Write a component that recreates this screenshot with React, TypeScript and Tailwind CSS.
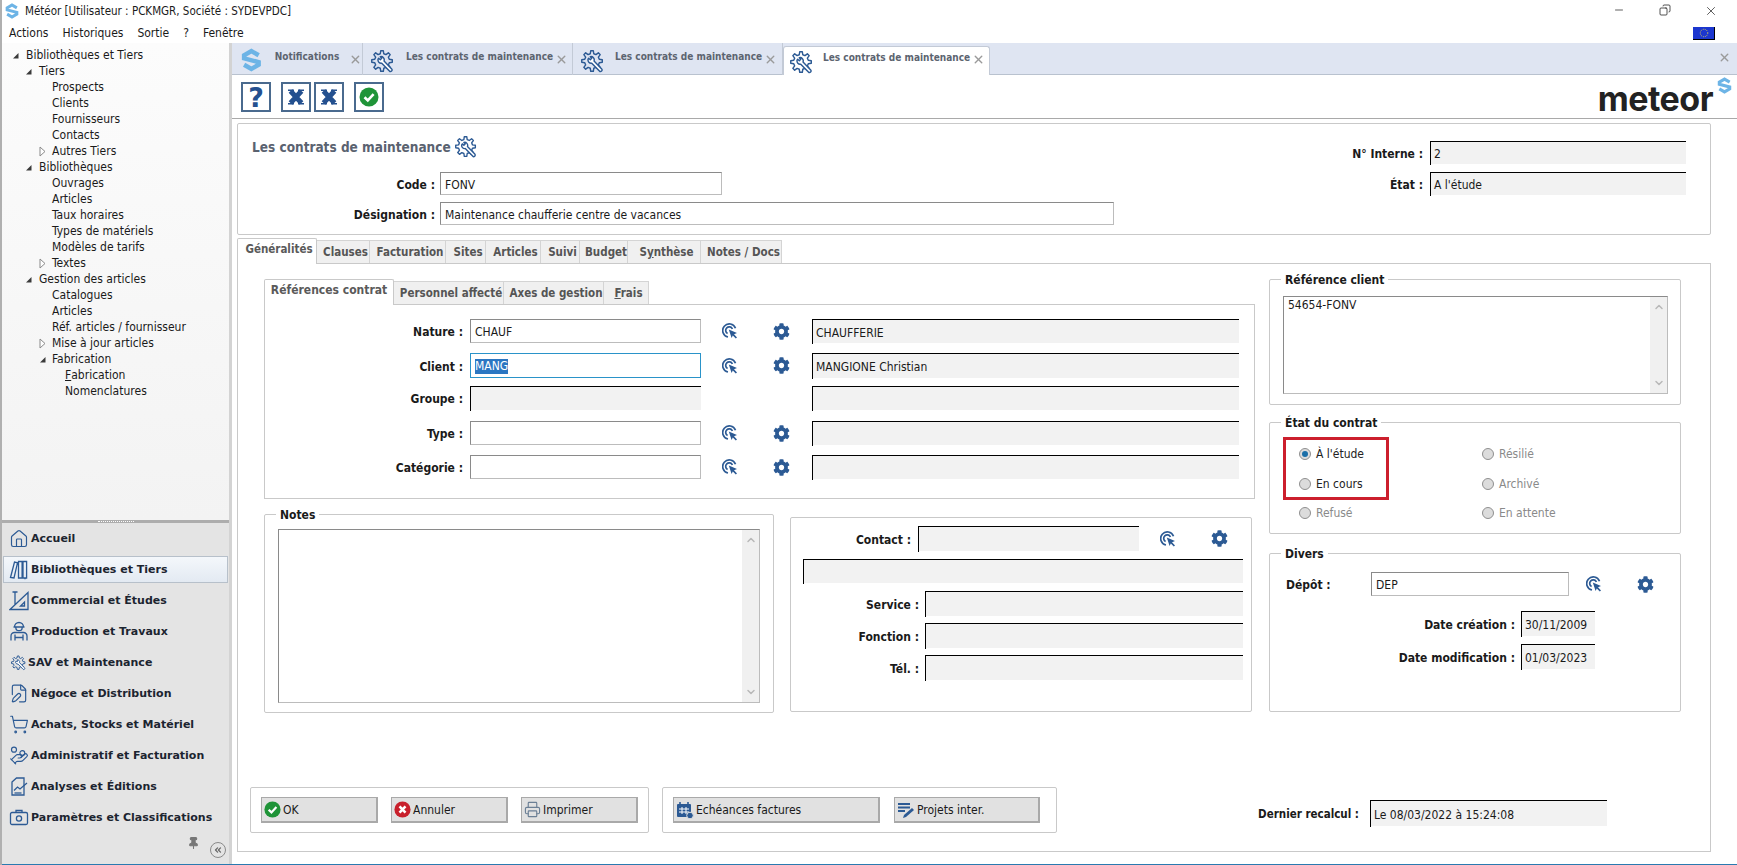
import React from "react";
import {
  ChevronDown,
  ChevronUp,
  ChevronsLeft,
  Copy,
  FilePen,
  HandCoins,
  House,
  Minus,
  Pin,
  Printer,
  ShoppingCart,
  X,
} from "lucide-react";
import { FaCog } from "react-icons/fa";

const BLUE = "#2c5a94";

const TREE: { label: React.ReactNode; level: number; state?: "open" | "closed" }[] = [
  { label: "Bibliothèques et Tiers", level: 0, state: "open" },
  { label: "Tiers", level: 1, state: "open" },
  { label: "Prospects", level: 2 },
  { label: "Clients", level: 2 },
  { label: "Fournisseurs", level: 2 },
  { label: "Contacts", level: 2 },
  { label: "Autres Tiers", level: 2, state: "closed" },
  { label: "Bibliothèques", level: 1, state: "open" },
  { label: "Ouvrages", level: 2 },
  { label: "Articles", level: 2 },
  { label: "Taux horaires", level: 2 },
  { label: "Types de matériels", level: 2 },
  { label: "Modèles de tarifs", level: 2 },
  { label: "Textes", level: 2, state: "closed" },
  { label: "Gestion des articles", level: 1, state: "open" },
  { label: "Catalogues", level: 2 },
  { label: "Articles", level: 2 },
  { label: "Réf. articles / fournisseur", level: 2 },
  { label: "Mise à jour articles", level: 2, state: "closed" },
  { label: "Fabrication", level: 2, state: "open" },
  { label: <><u>F</u>abrication</>, level: 3 },
  { label: "Nomenclatures", level: 3 },
];

// outline of an 8 tooth gear, centred at 11.5,11.5
const GEAR_PATH = (() => {
  const pts: string[] = [];
  const teeth = 8;
  for (let i = 0; i < teeth; i++) {
    const a = (i / teeth) * Math.PI * 2;
    const step = (Math.PI * 2) / teeth;
    const at = (r: number, t: number) =>
      `${(11.5 + r * Math.cos(a + t)).toFixed(2)} ${(11.5 + r * Math.sin(a + t)).toFixed(2)}`;
    pts.push(at(7.8, -step * 0.3), at(10.8, -step * 0.16), at(10.8, step * 0.16), at(7.8, step * 0.3));
  }
  return `M${pts.join("L")}Z`;
})();

function LogoS({ className }: { className?: string }) {
  return (
    <svg viewBox="0 0 24 28" className={className}>
      <path d="M20.5 8.5 12 3.5 3.5 8.5v3.5L20.5 16.5v3L12 24.5 3.5 19.5" fill="none" stroke="#6db4e6" strokeWidth="5.2" />
    </svg>
  );
}

function GearWrench({ className }: { className?: string }) {
  return (
    <svg viewBox="0 0 24 24" fill="none" stroke={BLUE} strokeWidth="1.5" strokeLinejoin="round" className={className}>
      <path d={GEAR_PATH} />
      <path d="M8 8.6l1.7 1.5 1.5-1.5L9.7 7a3.3 3.3 0 0 1 3.9 4.4l8 8.3a1.6 1.6 0 0 1-2.4 2.2l-8-8.2a3.3 3.3 0 0 1-3.8-4.1z" fill="#ffffff" />
    </svg>
  );
}

function TargetCursor({ className }: { className?: string }) {
  return (
    <svg viewBox="0 0 16 16" fill="none" stroke={BLUE} strokeWidth="1.7" className={className}>
      <path d="M13.5 5.2A6.6 6.6 0 1 0 6 14" />
      <path d="M10.4 6A3.5 3.5 0 1 0 5.6 10.5" />
      <path d="M6.8 6.6 15 10l-3 1.2 3 3.2-1.2 1.1-3-3.1L9.6 15z" fill={BLUE} stroke="none" />
    </svg>
  );
}

function CheckBadge({ className }: { className?: string }) {
  return (
    <svg viewBox="0 0 20 20" className={className}>
      <circle cx="10" cy="10" r="9.5" fill="#1f9438" />
      <path d="M5.5 10.2 8.8 13.4 14.6 7.2" fill="none" stroke="#ffffff" strokeWidth="2.6" />
    </svg>
  );
}

function CrossBadge({ className }: { className?: string }) {
  return (
    <svg viewBox="0 0 20 20" className={className}>
      <circle cx="10" cy="10" r="9.5" fill="#c8202c" />
      <path d="M6.5 6.2 13.5 13.8M13.5 6.2 6.5 13.8" fill="none" stroke="#ffffff" strokeWidth="3" />
    </svg>
  );
}

function SlabX() {
  return (
    <svg viewBox="0 0 20 20" className="w-[20px] h-[20px]">
      <path d="M4.5 4 15.5 16M15.5 4 4.5 16" stroke="#24508f" strokeWidth="5" fill="none" />
      <path d="M2 3.2h6M12 3.2h6M2 16.8h6M12 16.8h6" stroke="#24508f" strokeWidth="1.6" fill="none" />
    </svg>
  );
}

function Triangle({ state }: { state: "open" | "closed" }) {
  if (state === "open") {
    return (
      <svg viewBox="0 0 7 7" className="w-[7px] h-[7px]">
        <path d="M6.5 1v5.5H1z" fill="#3a3a3a" />
      </svg>
    );
  }
  return (
    <svg viewBox="0 0 7 11" className="w-[7px] h-[11px]">
      <path d="M1 1l5 4.5L1 10z" fill="#ffffff" stroke="#8a8a8a" />
    </svg>
  );
}

function Input({ value, className = "", focus = false }: { value?: string; className?: string; focus?: boolean }) {
  return (
    <div
      className={`h-full shrink-0 flex items-center pl-[4px] pt-[2px] bg-white border ${
        focus
          ? "border-[#2a93c9]"
          : "border-t-[#8a8a8a] border-l-[#8a8a8a] border-r-[#bcbcbc] border-b-[#bcbcbc]"
      } ${className}`}
    >
      {focus ? <span className="bg-[#2b76c2] text-white leading-[15px]">{value}</span> : value}
    </div>
  );
}

function ReadOnly({ value, className = "" }: { value?: string; className?: string }) {
  return (
    <div className={`relative h-full shrink-0 flex items-center pl-[4px] pt-[2px] bg-[#f2f2f2] border-t border-t-black ${className}`}>
      <span className="absolute left-0 top-0 bottom-[-1px] w-px bg-black" />
      {value}
    </div>
  );
}

function Label({ children, className = "" }: { children: React.ReactNode; className?: string }) {
  return <div className={`shrink-0 pt-[2px] font-bold text-right whitespace-nowrap ${className}`}>{children}</div>;
}

function Pickers({ className = "" }: { className?: string }) {
  return (
    <div className={`flex items-center shrink-0 ${className}`}>
      <TargetCursor className="w-[16px] h-[16px]" />
      <FaCog className="w-[17px] h-[17px] text-[#2c5a94] ml-[35px]" />
    </div>
  );
}

function DocTab({
  width,
  icon,
  label,
  close,
  active = false,
}: {
  width: string;
  icon: React.ReactNode;
  label: string;
  close: string;
  active?: boolean;
}) {
  return (
    <div
      className={`${width} shrink-0 flex items-center text-[10px] font-bold text-[#5c6470] ${
        active
          ? "bg-white border border-b-0 border-[#c3cad6] rounded-t-[3px] mt-[3px] -mb-px relative h-[29px]"
          : "h-[32px] border-r border-[#c3cad6]"
      }`}
    >
      {icon}
      <span className={`w-[141px] whitespace-nowrap ${active ? "mb-[7px]" : "mb-[4px]"}`}>{label}</span>
      <X className={`w-[13px] h-[13px] text-[#9a9a9a] ${close} ${active ? "-mt-[3px]" : ""}`} strokeWidth={2.6} />
    </div>
  );
}

function MainTab({
  children,
  width,
  active = false,
  size = "text-[11.5px]",
}: {
  children: React.ReactNode;
  width: string;
  active?: boolean;
  size?: string;
}) {
  return (
    <div
      className={`${width} ${size} shrink-0 flex justify-center font-bold whitespace-nowrap ${
        active
          ? "h-[26px] bg-white border border-b-0 border-[#c9c9c9] relative text-[#5a5a5a] pt-[2px] z-10 -mb-px rounded-t-[2px]"
          : "h-[23px] bg-[#f0f0f0] border-t border-r border-[#d4d4d4] text-[#555555] items-center pl-[5px]"
      }`}
    >
      {children}
    </div>
  );
}

function Group({ legend, className = "", children }: { legend?: string; className?: string; children: React.ReactNode }) {
  return (
    <div className={`relative border border-[#c9c9c9] rounded-[2px] shrink-0 ${className}`}>
      {legend && (
        <span className="absolute left-[11px] top-[-8px] bg-white px-[4px] font-bold text-[12px] leading-[16px] whitespace-nowrap">
          {legend}
        </span>
      )}
      {children}
    </div>
  );
}

function Scrollbar() {
  return (
    <div className="w-[17px] h-full bg-[#f0f0f0] flex flex-col justify-between items-center py-[4px] text-[#b8b8b8]">
      <ChevronUp className="w-[12px] h-[12px]" strokeWidth={3} />
      <ChevronDown className="w-[12px] h-[12px]" strokeWidth={3} />
    </div>
  );
}

function Radio({ label, checked = false, enabled = false }: { label: string; checked?: boolean; enabled?: boolean }) {
  return (
    <div className={`flex items-center h-[16px] ${enabled ? "text-[#222222]" : "text-[#8a8a8a]"}`}>
      <span className="w-[12px] h-[12px] rounded-full border border-[#8f8f8f] bg-[#dcdcdc] flex items-center justify-center shrink-0">
        {checked && <span className="w-[6px] h-[6px] rounded-full bg-[#1b6fa8]" />}
      </span>
      <span className="ml-[5px] whitespace-nowrap">{label}</span>
    </div>
  );
}

function ActionButton({ icon, label, width }: { icon: React.ReactNode; label: string; width: string }) {
  return (
    <div className={`${width} h-[26px] shrink-0 flex items-center pl-[2px] gap-[2px] bg-[#e1e1e1] border border-[#a9a9a9] border-b-2 border-r-2`}>
      {icon}
      {label}
    </div>
  );
}

function ToolButton({ children, className = "" }: { children: React.ReactNode; className?: string }) {
  return (
    <div className={`w-[30px] h-[30px] shrink-0 flex items-center justify-center border-2 border-[#4a6a8e] ${className}`}>
      {children}
    </div>
  );
}

function NavItem({ icon, label, active = false, small = false }: { icon: React.ReactNode; label: string; active?: boolean; small?: boolean }) {
  return (
    <div className="h-[31px] flex items-center">
      <div
        className={`flex items-center w-full h-[27px] ${small ? "pl-[9px]" : "pl-[7px]"} ${
          active ? "mx-[1px] bg-gradient-to-b from-[#f4f7fb] to-[#e3eaf2] border border-[#b7c0ca]" : ""
        }`}
      >
        <span className={`${small ? "w-[15px]" : "w-[20px]"} h-[20px] flex items-center justify-center shrink-0 ${active ? "-ml-[2px]" : ""}`}>
          {icon}
        </span>
        <span className="ml-[2px] font-bold whitespace-nowrap text-[11px] font-stretch-normal text-[#1c2430]">{label}</span>
      </div>
    </div>
  );
}

export default function App() {
  const navIcon = "w-[21px] h-[21px] text-[#2c5a94]";
  return (
    <div className="w-[1737px] h-[865px] overflow-hidden flex flex-col bg-white border-l-2 border-[#b0b0b0] text-[#1a1a1a] text-[12px] leading-[16px] font-['DejaVu_Sans',sans-serif] font-stretch-condensed">
      {/* title bar */}
      <div className="h-[22px] shrink-0 flex items-center pl-[3px] text-[11.5px]">
        <LogoS className="w-[14px] h-[16px]" />
        <span className="ml-[6px]">Météor [Utilisateur : PCKMGR, Société : SYDEVPDC]</span>
        <div className="ml-auto mr-[3px] flex">
          <div className="w-[46px] flex justify-center"><Minus className="w-[12px] h-[12px]" strokeWidth={1.4} /></div>
          <div className="w-[46px] flex justify-center"><Copy className="w-[12px] h-[12px] -scale-x-100" strokeWidth={1.5} /></div>
          <div className="w-[46px] flex justify-center"><X className="w-[14px] h-[14px]" strokeWidth={1.2} /></div>
        </div>
      </div>

      {/* menu */}
      <div className="h-[21px] shrink-0 flex items-center pl-[7px] pt-[1px] gap-[14px] text-[12px]">
        <span>Actions</span>
        <span>Historiques</span>
        <span>Sortie</span>
        <span>?</span>
        <span>Fenêtre</span>
        <div className="ml-auto mr-[22px] w-[22px] h-[13px] bg-[#1b36cf] border-r border-b border-black flex items-center justify-center">
          <svg viewBox="0 0 12 12" className="w-[10px] h-[10px]">
            <circle cx="6" cy="6" r="4.5" fill="none" stroke="#e8d84a" strokeWidth="1.2" strokeDasharray="1 1.4" />
          </svg>
        </div>
      </div>

      <div className="flex-1 flex min-h-0">
        {/* left navigation */}
        <div className="w-[227px] shrink-0 flex flex-col">
          <div className="h-[477px] shrink-0 bg-gradient-to-b from-[#fcfcfc] to-[#f3f3f3] pt-[4px]">
            {TREE.map((row, i) => {
              const rowClass =
                row.level === 0 ? "pl-[24px]" : row.level === 1 ? "pl-[37px]" : row.level === 2 ? "pl-[50px]" : "pl-[63px]";
              const arrowClass =
                row.level === 0 ? "left-[10px]" : row.level === 1 ? "left-[23px]" : "left-[37px]";
              return (
                <div key={i} className={`relative h-[16px] flex items-center whitespace-nowrap ${rowClass}`}>
                  {row.state && (
                    <span className={`absolute top-0 h-full flex items-center ${arrowClass}`}>
                      <Triangle state={row.state} />
                    </span>
                  )}
                  {row.label}
                </div>
              );
            })}
          </div>
          <div className="h-[3px] shrink-0 bg-[#adadad] flex justify-center items-center">
            <span className="w-[36px] border-t border-dotted border-white" />
          </div>
          <div className="flex-1 bg-[#e4e4e4] relative">
            <NavItem icon={<House className="w-[22px] h-[22px] text-[#2c5a94]" strokeWidth={1.4} />} label="Accueil" />
            <NavItem
              icon={
                <svg viewBox="0 0 20 20" fill="none" stroke={BLUE} strokeWidth="1.3" className="w-[21px] h-[21px]">
                  <path d="M1.5 18 5.5 2.5l3 .8L5 18.5zM9.5 2h3.6v16.5H9.5zM14 2h3.6v16.5H14zM16 18.5v1.2" />
                </svg>
              }
              label="Bibliothèques et Tiers"
              active
            />
            <NavItem
              icon={
                <svg viewBox="0 0 20 20" fill="none" stroke={BLUE} strokeWidth="1.3" className="w-[21px] h-[21px]">
                  <path d="M1 19 19 2v17zM6 1.5v13M3.5 1.5h5M15.5 15.5h-4l4-4z" />
                </svg>
              }
              label="Commercial et Études"
            />
            <NavItem
              icon={
                <svg viewBox="0 0 20 20" fill="none" stroke={BLUE} strokeWidth="1.3" className="w-[21px] h-[21px]">
                  <path d="M5.5 5.5a4.5 4.5 0 0 1 9 0zM4.5 5.5h11M6.8 6a3.2 3.2 0 0 0 6.4 0" />
                  <path d="M2 19v-4.5A3.5 3.5 0 0 1 5.5 11h9a3.5 3.5 0 0 1 3.5 3.5V19M6 13v6M14 13v6M6 16h8" />
                </svg>
              }
              label="Production et Travaux"
            />
            <NavItem icon={<GearWrench className="w-[16px] h-[16px]" />} label="SAV et Maintenance" small />
            <NavItem icon={<FilePen className={navIcon} strokeWidth={1.4} />} label="Négoce et Distribution" />
            <NavItem icon={<ShoppingCart className={navIcon} strokeWidth={1.4} />} label="Achats, Stocks et Matériel" />
            <NavItem icon={<HandCoins className={navIcon} strokeWidth={1.4} />} label="Administratif et Facturation" />
            <NavItem
              icon={
                <svg viewBox="0 0 20 20" fill="none" stroke={BLUE} strokeWidth="1.3" className="w-[21px] h-[21px]">
                  <path d="M3 5.5 7.5 1.5H15v17H3z" />
                  <path d="M5 14l3.5-3.5 2.5 2 7-6" />
                  <path d="M5.5 16.5h7" />
                </svg>
              }
              label="Analyses et Éditions"
            />
            <NavItem
              icon={
                <svg viewBox="0 0 20 20" fill="none" stroke={BLUE} strokeWidth="1.3" className="w-[21px] h-[21px]">
                  <rect x="1.5" y="5" width="17" height="12" rx="1.5" />
                  <path d="M7 5V3h6v2" />
                  <circle cx="10" cy="11" r="2.6" />
                </svg>
              }
              label="Paramètres et Classifications"
            />
            <div className="flex justify-end items-start pr-[3px]">
              <Pin className="w-[13px] h-[18px] text-[#777777] fill-[#777777] mt-[1px]" />
              <span className="ml-[10px] mt-[9px] w-[16px] h-[16px] rounded-full border border-[#8a8a8a] flex items-center justify-center">
                <ChevronsLeft className="w-[10px] h-[10px] text-[#666666]" strokeWidth={3} />
              </span>
            </div>
          </div>
        </div>

        <div className="w-[3px] shrink-0 bg-[#d3d3d3]" />

        {/* main area */}
        <div className="flex-1 min-w-0 flex flex-col">
          <div className="h-[32px] shrink-0 flex bg-[#dfe5f2] border-b border-[#b9c2cf]">
            <DocTab
              width="w-[131px]"
              icon={<LogoS className="w-[21px] h-[24px] ml-[9px] mr-[13px] mt-[2px]" />}
              label="Notifications"
              close="-ml-[65px]"
            />
            <DocTab
              width="w-[210px]"
              icon={<GearWrench className="w-[23px] h-[23px] ml-[8px] mr-[12px] mt-[4px]" />}
              label="Les contrats de maintenance"
              close="ml-[8px]"
            />
            <DocTab
              width="w-[210px]"
              icon={<GearWrench className="w-[23px] h-[23px] ml-[8px] mr-[11px] mt-[4px]" />}
              label="Les contrats de maintenance"
              close="ml-[8px]"
            />
            <DocTab
              width="w-[207px]"
              icon={<GearWrench className="w-[23px] h-[23px] ml-[6px] mr-[10px] mt-[3px]" />}
              label="Les contrats de maintenance"
              close="ml-[8px]"
              active
            />
            <X className="ml-auto mr-[6px] mt-[8px] w-[13px] h-[13px] text-[#9a9a9a]" strokeWidth={2.6} />
          </div>

          <div className="h-[44px] shrink-0 flex items-center pl-[9px] pt-[1px] border-b border-[#a9a9a9]">
            <ToolButton>
              <span className="text-[27px] font-black text-[#24508f] font-stretch-normal leading-none">?</span>
            </ToolButton>
            <ToolButton className="ml-[10px]"><SlabX /></ToolButton>
            <ToolButton className="ml-[3px]"><SlabX /></ToolButton>
            <ToolButton className="ml-[10px]"><CheckBadge className="w-[20px] h-[20px]" /></ToolButton>
            <div className="ml-auto mr-[5px] flex items-start">
              <span className="font-['Inter',sans-serif] font-stretch-normal font-bold text-[34px] leading-[36px] tracking-[-0.5px] text-[#222222] mt-[3px]">
                meteor
              </span>
              <LogoS className="w-[15px] h-[17px] ml-[4px] -mt-[1px]" />
            </div>
          </div>

          <div className="flex-1 min-h-0 pl-[5px]">
            {/* header */}
            <div className="mt-[4px] w-[1474px] h-[112px] border border-[#c9c9c9] rounded-[2px] flex justify-between">
              <div className="flex flex-col">
                <div className="h-[22px] mt-[12px] ml-[14px] flex items-center text-[13.5px] font-bold text-[#5a6270]">
                  Les contrats de maintenance
                  <GearWrench className="w-[22px] h-[22px] ml-[4px]" />
                </div>
                <div className="h-[23px] mt-[14px] flex items-center">
                  <Label className="w-[197px]">Code :</Label>
                  <Input value="FONV" className="w-[282px] ml-[5px]" />
                </div>
                <div className="h-[23px] mt-[7px] flex items-center">
                  <Label className="w-[197px]">Désignation :</Label>
                  <Input value="Maintenance chaufferie centre de vacances" className="w-[674px] ml-[5px]" />
                </div>
              </div>
              <div className="mt-[17px] mr-[24px] flex flex-col gap-[8px]">
                <div className="h-[23px] flex items-center justify-end">
                  <Label>N° Interne :</Label>
                  <ReadOnly value="2" className="w-[256px] ml-[7px]" />
                </div>
                <div className="h-[23px] flex items-center justify-end">
                  <Label>État :</Label>
                  <ReadOnly value="A l'étude" className="w-[256px] ml-[7px]" />
                </div>
              </div>
            </div>

            {/* main tabs */}
            <div className="mt-[3px] h-[25px] flex items-end pt-0">
              <MainTab width="w-[80px] pl-[4px]" active>Généralités</MainTab>
              <MainTab width="w-[53px]">Clauses</MainTab>
              <MainTab width="w-[76px]">Facturation</MainTab>
              <MainTab width="w-[40px]">Sites</MainTab>
              <MainTab width="w-[55px]">Articles</MainTab>
              <MainTab width="w-[39px]">Suivi</MainTab>
              <MainTab width="w-[48px]">Budget</MainTab>
              <MainTab width="w-[73px]"><span>S<u>y</u>nthèse</span></MainTab>
              <MainTab width="w-[81px]">Notes / Docs</MainTab>
            </div>

            <div className="w-[1474px] h-[589px] border border-[#c9c9c9] flex">
              {/* left part */}
              <div className="w-[1031px] shrink-0 pl-[12px]">
                <div className="pl-[14px]">
                  <div className="mt-[16px] h-[24px] flex items-end">
                    <MainTab width="w-[130px]" size="text-[12px]" active>Références contrat</MainTab>
                    <MainTab width="w-[110px]">Personnel affecté</MainTab>
                    <MainTab width="w-[100px]">Axes de gestion</MainTab>
                    <MainTab width="w-[45px]"><span><u>F</u>rais</span></MainTab>
                  </div>
                  <div className="w-[991px] h-[195px] border border-[#c9c9c9] pt-[14px]">
                    <div className="h-[24px] flex items-center">
                      <Label className="w-[198px]">Nature :</Label>
                      <Input value="CHAUF" className="w-[231px] ml-[7px]" />
                      <Pickers className="w-[111px] pl-[21px]" />
                      <ReadOnly value="CHAUFFERIE" className="w-[427px]" />
                    </div>
                    <div className="h-[25px] mt-[10px] flex items-center">
                      <Label className="w-[198px]">Client :</Label>
                      <Input value="MANG" focus className="w-[231px] ml-[7px]" />
                      <Pickers className="w-[111px] pl-[21px]" />
                      <ReadOnly value="MANGIONE Christian" className="w-[427px]" />
                    </div>
                    <div className="h-[24px] mt-[8px] flex items-center">
                      <Label className="w-[198px]">Groupe :</Label>
                      <ReadOnly className="w-[231px] ml-[7px] mr-[111px]" />
                      <ReadOnly className="w-[427px]" />
                    </div>
                    <div className="h-[24px] mt-[11px] flex items-center">
                      <Label className="w-[198px]">Type :</Label>
                      <Input className="w-[231px] ml-[7px]" />
                      <Pickers className="w-[111px] pl-[21px]" />
                      <ReadOnly className="w-[427px]" />
                    </div>
                    <div className="h-[24px] mt-[10px] flex items-center">
                      <Label className="w-[198px]">Catégorie :</Label>
                      <Input className="w-[231px] ml-[7px]" />
                      <Pickers className="w-[111px] pl-[21px]" />
                      <ReadOnly className="w-[427px]" />
                    </div>
                  </div>

                  <div className="flex items-start mt-[15px]">
                    <Group legend="Notes" className="w-[510px] h-[199px] pl-[13px] pt-[14px]">
                      <div className="w-[482px] h-[174px] flex justify-end border border-t-[#8a8a8a] border-l-[#8a8a8a] border-r-[#bcbcbc] border-b-[#bcbcbc]">
                        <Scrollbar />
                      </div>
                    </Group>
                    <Group className="w-[462px] h-[195px] ml-[16px] mt-[3px] pt-[8px]">
                      <div className="h-[25px] flex items-center">
                        <Label className="w-[120px]">Contact :</Label>
                        <ReadOnly className="w-[221px] ml-[7px]" />
                        <Pickers className="ml-[21px]" />
                      </div>
                      <div className="h-[24px] mt-[8px] flex">
                        <ReadOnly className="w-[440px] ml-[12px]" />
                      </div>
                      <div className="h-[25px] mt-[8px] flex items-center">
                        <Label className="w-[128px]">Service :</Label>
                        <ReadOnly className="w-[318px] ml-[6px]" />
                      </div>
                      <div className="h-[25px] mt-[7px] flex items-center">
                        <Label className="w-[128px]">Fonction :</Label>
                        <ReadOnly className="w-[318px] ml-[6px]" />
                      </div>
                      <div className="h-[25px] mt-[7px] flex items-center">
                        <Label className="w-[128px]">Tél. :</Label>
                        <ReadOnly className="w-[318px] ml-[6px]" />
                      </div>
                    </Group>
                  </div>
                </div>

                <div className="flex mt-[74px]">
                  <Group className="w-[399px] h-[46px] flex items-center pl-[10px] gap-[13px]">
                    <ActionButton width="w-[117px]" icon={<CheckBadge className="w-[17px] h-[17px]" />} label="OK" />
                    <ActionButton width="w-[117px]" icon={<CrossBadge className="w-[17px] h-[17px]" />} label="Annuler" />
                    <ActionButton width="w-[117px]" icon={<Printer className="w-[17px] h-[17px] text-[#6b7f95]" strokeWidth={1.6} />} label="Imprimer" />
                  </Group>
                  <Group className="w-[395px] h-[46px] ml-[13px] flex items-center pl-[10px] gap-[14px]">
                    <ActionButton
                      width="w-[207px]"
                      icon={
                        <svg viewBox="0 0 18 18" className="w-[18px] h-[18px]">
                          <rect x="1" y="3" width="14" height="13" rx="1" fill={BLUE} />
                          <path d="M4 1v3M12 1v3" stroke={BLUE} strokeWidth="1.6" />
                          <path d="M3 8h10M3 11h10M6 6v7M10 6v7" stroke="#ffffff" strokeWidth="1" />
                          <circle cx="14" cy="14.5" r="3.3" fill={BLUE} stroke="#e1e1e1" />
                        </svg>
                      }
                      label="Echéances factures"
                    />
                    <ActionButton
                      width="w-[146px]"
                      icon={
                        <svg viewBox="0 0 18 18" className="w-[18px] h-[18px]">
                          <path d="M1 3h12M1 6.5h12M1 10h7" stroke={BLUE} strokeWidth="1.8" />
                          <path d="M6 17l1-3 8-7 2 2-8 7z" fill={BLUE} />
                        </svg>
                      }
                      label="Projets inter."
                    />
                  </Group>
                </div>
              </div>

              {/* right part */}
              <div className="w-[412px] shrink-0 pt-[15px]">
                <Group legend="Référence client" className="h-[126px] pl-[13px] pt-[16px]">
                  <div className="w-[385px] h-[98px] flex justify-between border border-t-[#8a8a8a] border-l-[#8a8a8a] border-r-[#bcbcbc] border-b-[#bcbcbc]">
                    <span className="pl-[4px] pt-[0px]">54654-FONV</span>
                    <Scrollbar />
                  </div>
                </Group>
                <Group legend="État du contrat" className="h-[112px] mt-[17px] pl-[29px] pt-[23px]">
                  <div className="grid grid-cols-[183px_1fr] auto-rows-[16px] gap-y-[13.5px]">
                    <Radio label="À l'étude" checked enabled />
                    <Radio label="Résilié" />
                    <Radio label="En cours" enabled />
                    <Radio label="Archivé" />
                    <Radio label="Refusé" />
                    <Radio label="En attente" />
                  </div>
                  <div className="absolute left-[13px] top-[14px] w-[106px] h-[63px] border-[3px] border-[#cc1f2d]" />
                </Group>
                <Group legend="Divers" className="h-[159px] mt-[19px] pt-[18px]">
                  <div className="h-[24px] flex items-center">
                    <div className="w-[101px] pl-[16px] pt-[2px] font-bold shrink-0">Dépôt :</div>
                    <Input value="DEP" className="w-[198px]" />
                    <Pickers className="ml-[17px]" />
                  </div>
                  <div className="h-[25px] mt-[15px] flex items-center">
                    <Label className="w-[245px]">Date création :</Label>
                    <ReadOnly value="30/11/2009" className="w-[74px] ml-[6px]" />
                  </div>
                  <div className="h-[25px] mt-[8px] flex items-center">
                    <Label className="w-[245px]">Date modification :</Label>
                    <ReadOnly value="01/03/2023" className="w-[74px] ml-[6px]" />
                  </div>
                </Group>
                <div className="h-[26px] mt-[88px] flex items-center">
                  <div className="w-[90px] flex justify-end shrink-0">
                    <Label className="text-[11.5px]">Dernier recalcul :</Label>
                  </div>
                  <ReadOnly value="Le 08/03/2022 à 15:24:08" className="w-[237px] ml-[11px]" />
                </div>
              </div>
            </div>
          </div>
        </div>
      </div>
      <div className="h-px shrink-0 bg-[#2a7ab0]" />
    </div>
  );
}
